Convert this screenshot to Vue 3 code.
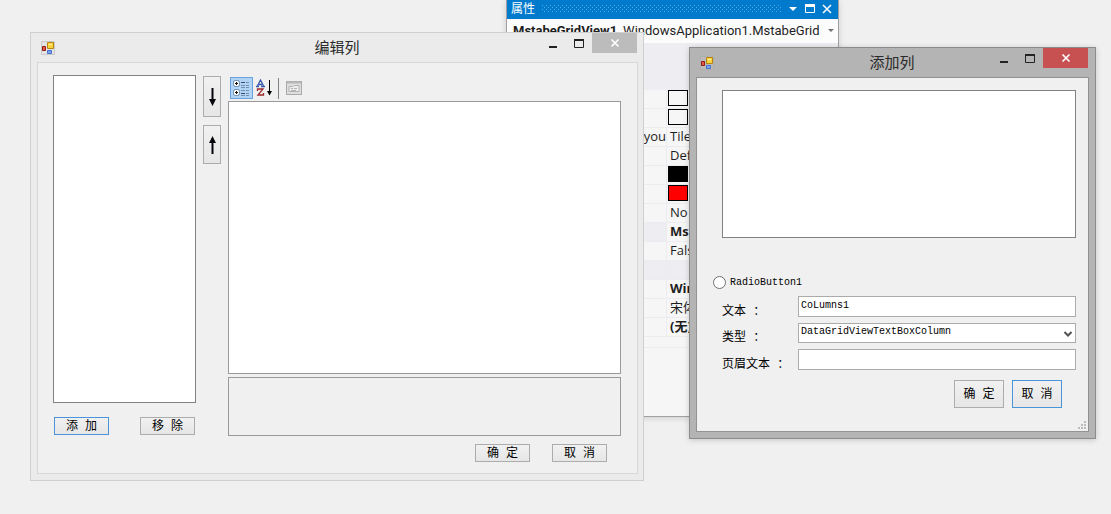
<script setup>
import { ref } from 'vue'

const rows = [
  { swatch: 'empty' },
  { swatch: 'empty' },
  { name: 'ayou', value: 'Tile' },
  { value: 'Def' },
  { swatch: 'black' },
  { swatch: 'red' },
  { value: 'No' },
  { value: 'Mst', bold: true, selected: true },
  { value: 'Fals' },
  { category: true },
  { value: 'Win', bold: true },
  { value: '宋体' },
  { value: '(无)', bold: true },
]
const columnText = ref('CoLumns1')
const columnType = ref('DataGridViewTextBoxColumn')
const headerText = ref('')
const picked = ref('')
</script>

<template>
  <main class="desktop">
    <section class="panel" aria-label="属性">
      <header class="panel-head">
        <span>属性</span>
        <svg class="dots" height="7" aria-hidden="true">
          <defs>
            <pattern id="dots" width="4" height="4" patternUnits="userSpaceOnUse">
              <rect width="1" height="1" fill="#59a8de" />
              <rect x="2" y="2" width="1" height="1" fill="#59a8de" />
            </pattern>
          </defs>
          <rect width="100%" height="7" fill="url(#dots)" />
        </svg>
        <button class="panel-btn" aria-label="窗口位置">
          <svg width="10" height="10"><path d="M1 3h8L5 7z" fill="#fff" /></svg>
        </button>
        <button class="panel-btn" aria-label="最大化">
          <svg width="10" height="10"><path d="M.5 .5h9v8H.5z" fill="none" stroke="#fff" /><path d="M0 0h10v3H0z" fill="#fff" /></svg>
        </button>
        <button class="panel-btn" aria-label="关闭">
          <svg width="10" height="10"><path d="M1 1l8 8M9 1l-8 8" fill="none" stroke="#fff" stroke-width="1.500" /></svg>
        </button>
      </header>
      <button class="object">
        <b>MstabeGridView1</b>
        <span>WindowsApplication1.MstabeGrid</span>
        <svg width="6" height="4"><path d="M0 0h6L3 3z" fill="#717171" /></svg>
      </button>
      <div class="panel-tools"></div>
      <table class="props">
        <tbody>
          <tr v-for="(r, i) in rows" :key="i" :class="{ category: r.category, selected: r.selected }">
            <td class="name">{{ r.name }}</td>
            <td class="value" :class="{ bold: r.bold }">
              <span v-if="r.swatch" class="swatch" :class="r.swatch"></span>
              <template v-else>{{ r.value }}</template>
            </td>
          </tr>
        </tbody>
      </table>
      <div class="props-end"></div>
    </section>

    <section class="win edit" aria-labelledby="edit-title">
      <header class="bar">
        <svg class="app" width="14" height="14" aria-hidden="true">
          <path d="M.5 .5h13v13H.5z" fill="#e4e4e4" stroke="#c8c8c8" />
          <path d="M1.500 5.500h3v4h-3z" fill="#e05a48" stroke="#941c16" />
          <path d="M6.500 1.500h6v6h-6z" fill="#f9d43c" stroke="#b98512" />
          <path d="M8 3h3v1H8z" fill="#fff3a6" />
          <path d="M6.500 9.500h4v3h-4z" fill="#78a8f4" stroke="#4a6fc8" />
        </svg>
        <h1 id="edit-title">编辑列</h1>
        <div class="controls">
          <button aria-label="最小化"><svg width="12" height="12"><path d="M2 9h8v2H2z" fill="#222" /></svg></button>
          <button aria-label="最大化"><svg width="12" height="12"><path d="M1.500 3v7.500h9V3" fill="none" stroke="#222" /><path d="M1 2h10v2H1z" fill="#222" /></svg></button>
          <button class="close" aria-label="关闭"><svg width="10" height="10"><path d="M1.500 1.500l7 7M8.500 1.500l-7 7" stroke="#fff" stroke-width="1.700" /></svg></button>
        </div>
      </header>
      <div class="client">
        <div class="left">
          <div class="list edit-list"></div>
          <div class="pair">
            <button class="btn focus">添 加</button>
            <button class="btn">移 除</button>
          </div>
        </div>
        <div class="arrows">
          <button class="btn arrow down" aria-label="下移"><svg width="7" height="18"><path d="M2.500 0h2v11H7L3.500 18 0 11h2.500z" fill="#05050c" /></svg></button>
          <button class="btn arrow up" aria-label="上移"><svg width="7" height="18"><path d="M2.500 18h2V7H7L3.500 0 0 7h2.500z" fill="#05050c" /></svg></button>
        </div>
        <div class="right">
          <div class="tools">
            <button class="tool on" aria-label="按分类顺序">
              <svg width="19" height="18">
                <rect x="1.500" y="1.500" width="6" height="6" rx="2" fill="#fff" stroke="#6b89ad" />
                <rect x="1.500" y="10.500" width="6" height="6" rx="2" fill="#fff" stroke="#6b89ad" />
                <path d="M3 4.500h3M4.500 3v3M3 13.500h3M4.500 12v3" stroke="#111" />
                <path d="M9 3.500h4M9 14.500h4" stroke="#3a4a66" />
                <path d="M9 6.500h4M9 8.500h4M9 11.500h4M9 16.500h4M14 3.500h3M14 6.500h3M14 8.500h3M14 11.500h3M14 14.500h3M14 16.500h3" stroke="#7390b0" />
              </svg>
            </button>
            <button class="tool sort" aria-label="按字母顺序">
              <svg width="17" height="18">
                <path d="M0 7.500h3M5 7.500h4M1.500 7L4.500 1L7.500 7M3 5.500h3" fill="none" stroke="#365aa8" stroke-width="1.300" />
                <path d="M1.500 12v-2H7L2 16h5.500v-2" fill="none" stroke="#9a2b2b" stroke-width="1.300" />
                <path d="M13 1h1v11h2l-2.500 4.500L11 12h2z" fill="#000" />
              </svg>
            </button>
            <span class="sep"></span>
            <button class="tool pages" aria-label="属性页">
              <svg width="16" height="16">
                <rect x=".5" y="1.500" width="15" height="13" fill="#dedede" stroke="#aaa" />
                <path d="M1 2.500h14" stroke="#b8b8b8" stroke-width="2" />
                <path d="M3 6.500h4l1-1h5v6H3z" fill="#eee" stroke="#b2b2b2" />
                <path d="M5 8.500h2M8 8.500h3M5 10.500h5" stroke="#b2b2b2" />
              </svg>
            </button>
          </div>
          <div class="grid-box"></div>
          <div class="help-box"></div>
          <div class="actions">
            <button class="btn">确 定</button>
            <button class="btn">取 消</button>
          </div>
        </div>
      </div>
    </section>

    <section class="win add" aria-labelledby="add-title">
      <header class="bar">
        <svg class="app" width="14" height="14" aria-hidden="true">
          <path d="M.5 .5h13v13H.5z" fill="#bababa" stroke="#aeaeae" />
          <path d="M1.500 5.500h3v4h-3z" fill="#e05a48" stroke="#941c16" />
          <path d="M6.500 1.500h6v6h-6z" fill="#f9d43c" stroke="#b98512" />
          <path d="M8 3h3v1H8z" fill="#fff3a6" />
          <path d="M6.500 9.500h4v3h-4z" fill="#78a8f4" stroke="#4a6fc8" />
        </svg>
        <h1 id="add-title">添加列</h1>
        <div class="controls">
          <button aria-label="最小化"><svg width="12" height="12"><path d="M2 9h8v2H2z" fill="#222" /></svg></button>
          <button aria-label="最大化"><svg width="12" height="12"><path d="M1.500 3v7.500h9V3" fill="none" stroke="#222" /><path d="M1 2h10v2H1z" fill="#222" /></svg></button>
          <button class="close" aria-label="关闭"><svg width="10" height="10"><path d="M1.500 1.500l7 7M8.500 1.500l-7 7" stroke="#fff" stroke-width="1.700" /></svg></button>
        </div>
      </header>
      <form class="client" @submit.prevent>
        <div class="list add-list"></div>
        <label class="radio"><input v-model="picked" type="radio" name="mode" value="1" /><span>RadioButton1</span></label>
        <div class="fields">
          <label for="f-text">文本 ：</label>
          <input id="f-text" v-model="columnText" class="field" type="text" />
          <label for="f-type">类型 ：</label>
          <div class="combo">
            <select id="f-type" v-model="columnType" class="field">
              <option>DataGridViewTextBoxColumn</option>
            </select>
            <svg width="8" height="7" aria-hidden="true"><path d="M.5 1L4 4.500 7.500 1" fill="none" stroke="#555" stroke-width="2" /></svg>
          </div>
          <label for="f-head">页眉文本 ：</label>
          <input id="f-head" v-model="headerText" class="field" type="text" />
        </div>
        <div class="actions">
          <button type="button" class="btn big">确 定</button>
          <button type="button" class="btn big focus">取 消</button>
        </div>
        <svg class="grip" width="8" height="8" aria-hidden="true">
          <path d="M6 0h2v2H6zM3 3h2v2H3zM6 3h2v2H6zM0 6h2v2H0zM3 6h2v2H3zM6 6h2v2H6z" fill="#bcbcbc" />
        </svg>
      </form>
    </section>
  </main>
</template>

<style>
body {
  background: #f0f0f0;
}
</style>

<style scoped>
.desktop {
  position: relative;
  min-height: 100vh;
  overflow: hidden;
  background: #f0f0f0;
  font: 12px/16px "Liberation Mono", "Noto Sans CJK SC", monospace;
  color: #000;
}
.desktop *,
.desktop {
  box-sizing: border-box;
}
button {
  margin: 0;
  padding: 0;
  border: 0;
  background: none;
  font: inherit;
  color: inherit;
}
svg {
  display: block;
}

/* properties panel */
.panel {
  position: absolute;
  left: 506px;
  top: 0;
  width: 333px;
  border: 1px solid #a0a0a4;
  border-top: 0;
  background: #f6f6f6;
  box-shadow: 0 1px 6px rgba(0, 0, 0, 0.15);
  font: 13px/16px "Open Sans", "Noto Sans CJK SC", sans-serif;
  color: #1e1e1e;
}
.panel-head {
  display: flex;
  align-items: center;
  gap: 7px;
  height: 19px;
  padding: 0 6px 2px 4px;
  background: #007acc;
  color: #fff;
  font-size: 12px;
}
.dots {
  flex: 1;
  min-width: 0;
}
.panel-btn {
  display: flex;
}
.object {
  display: flex;
  align-items: center;
  gap: 6px;
  width: 100%;
  height: 24px;
  padding: 0 4px 0 6px;
  background: #fcfcfc;
  font-family: Roboto, "Noto Sans CJK SC", sans-serif;
  white-space: nowrap;
}
.object svg {
  flex: none;
  margin-left: auto;
}
.panel-tools {
  height: 47px;
  background: #eeeef2;
}
.props {
  width: 100%;
  table-layout: fixed;
  border-spacing: 0;
}
.props td {
  height: 19px;
  padding: 0 0 2px;
  border-bottom: 1px solid #ececf0;
  overflow: hidden;
  white-space: nowrap;
}
.props .name {
  width: 160px;
  border-right: 1px solid #ececf0;
  text-align: right;
}
.value {
  text-indent: 3px;
}
.bold {
  font-weight: 700;
}
.category td,
.selected .name {
  background: #eeeef2;
}
.swatch {
  display: block;
  width: 20px;
  height: 16px;
  margin-left: 1px;
  border: 1px solid #000;
}
.black {
  background: #000;
}
.red {
  background: #f00;
}
.props-end {
  height: 79px;
  background: linear-gradient(#ececf0, #ececf0) 0 10px / 100% 1px no-repeat;
}

/* windows */
.win {
  position: absolute;
  padding: 0 6px 6px;
  border: 1px solid;
}
.edit {
  left: 30px;
  top: 32px;
  width: 614px;
  padding-right: 5px;
  background: #ebebeb;
  border-color: #cfcfcf;
}
.add {
  left: 689px;
  top: 47px;
  width: 407px;
  background: #b4b4b4;
  border-color: #8b8b8b;
  box-shadow: 0 1px 6px rgba(0, 0, 0, 0.18);
}
.bar {
  display: grid;
  grid-template-columns: 1fr auto 1fr;
  align-items: center;
  height: 29px;
  padding-right: 1px;
}
.app {
  margin-left: 4px;
}
h1 {
  margin: 0;
  font: 15px/24px "Noto Sans CJK SC", sans-serif;
  padding-bottom: 2px;
  color: #2a2a2a;
}
.controls {
  display: flex;
  justify-content: flex-end;
  align-self: start;
}
.controls button {
  display: flex;
  align-items: center;
  justify-content: center;
  width: 26px;
  height: 20px;
}
.controls .close {
  width: 45px;
  background: #bcbcbc;
}
.add .close {
  background: #c75050;
}
.client {
  position: relative;
  background: #f0f0f0;
  border: 1px solid #d7d7d7;
}
.add .client {
  border-color: #929292;
  padding: 12px 12px 23px 16px;
}
.edit .client {
  display: flex;
  padding: 12px 16px 11px 15px;
}
.list {
  background: #fff;
  border: 1px solid #828282;
}
.left {
  width: 143px;
}
.edit-list {
  height: 328px;
}
.pair {
  display: flex;
  justify-content: space-between;
  margin-top: 14px;
  padding: 0 1px;
}
.btn {
  display: flex;
  align-items: center;
  justify-content: center;
  width: 55px;
  height: 18px;
  border: 1px solid #acacac;
  background: linear-gradient(#f1f1f1, #e6e6e6);
  white-space: pre;
}
.pair .btn,
.actions .btn {
  padding-top: 2px;
}
.focus {
  border-color: #4a94dc;
}
.arrows {
  display: flex;
  flex-direction: column;
  gap: 8px;
  margin: 1px 7px 0;
}
.arrow {
  width: 18px;
}
.down {
  height: 41px;
}
.up {
  height: 39px;
}
.actions .big {
  width: 50px;
  height: 28px;
}
.right {
  flex: 1;
  min-width: 0;
}
.tools {
  display: flex;
  align-items: center;
  height: 22px;
  margin: 2px 0;
  padding-left: 2px;
}
.tool {
  display: flex;
  align-items: center;
  justify-content: center;
  width: 23px;
  height: 22px;
}
.sort {
  width: 22px;
}
.on {
  border: 1px solid #6aa3dc;
  background: #b0d3f6;
}
.sep {
  width: 1px;
  height: 21px;
  margin: 0 3px;
  background: #808080;
}
.grid-box {
  height: 273px;
  background: #fff;
  border: 1px solid #9a9a9a;
}
.help-box {
  height: 59px;
  margin-top: 3px;
  border: 1px solid #9a9a9a;
}
.actions {
  display: flex;
  justify-content: flex-end;
  gap: 22px;
  margin-top: 8px;
  padding-right: 14px;
}

/* add-column form */
.add-list {
  height: 148px;
  margin-left: 9px;
}
.radio {
  display: flex;
  align-items: center;
  gap: 4px;
  height: 14px;
  margin-top: 37px;
  font-size: 10px;
}
.radio span {
  padding-top: 2px;
}
.radio input {
  appearance: none;
  width: 13px;
  height: 13px;
  margin: 0;
  border: 1px solid #707070;
  border-radius: 50%;
  background: #fff;
}
.fields {
  display: grid;
  grid-template-columns: 76px 1fr;
  row-gap: 6px;
  margin: 7px 0 0 9px;
}
.fields label {
  align-self: end;
  line-height: 10px;
  white-space: nowrap;
}
.field {
  display: block;
  width: 100%;
  height: 21px;
  margin: 0;
  padding: 0 2px 2px;
  border: 1px solid #ababab;
  border-radius: 0;
  background: #fff;
  color: #000;
  font: 10px/16px "Liberation Mono", "Noto Sans CJK SC", monospace;
  appearance: none;
}
.combo {
  position: relative;
}
.combo .field {
  height: 20px;
}
.combo svg {
  position: absolute;
  right: 4px;
  top: 8px;
}
.add .actions {
  gap: 8px;
  margin-top: 10px;
}
.grip {
  position: absolute;
  right: 2px;
  bottom: 2px;
}
</style>
